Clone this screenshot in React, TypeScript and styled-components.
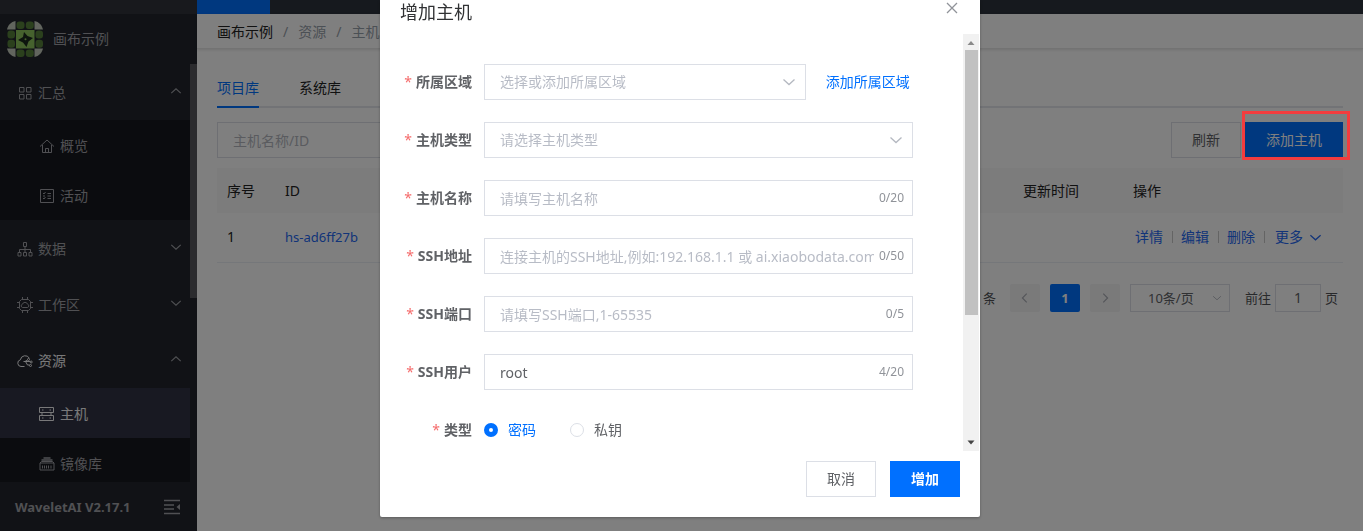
import React, { useState } from 'react';
import styled, { createGlobalStyle, css } from 'styled-components';

const Global = createGlobalStyle`
  *, *::before, *::after { box-sizing: border-box; }
  body {
    margin: 0;
    overflow: hidden;
    background: #fff;
    color: #303133;
    font: 14px/20px "Noto Sans", "Noto Sans CJK SC", sans-serif;
  }
  button, input, select { font: inherit; margin: 0; border-radius: 0; outline: none; }
  button { cursor: pointer; padding: 0; background: none; border: 0; color: inherit; }
  a { text-decoration: none; color: inherit; }
`;

const Svg = styled.svg<{ $size: number; $stroke?: number }>`
  width: ${p => p.$size}px;
  height: ${p => p.$size}px;
  flex: none;
  fill: none;
  stroke: currentColor;
  stroke-width: ${p => p.$stroke ?? 1};
`;

const Page = styled.div`
  display: flex;
  min-height: 100vh;
`;

/* ---------- sidebar ---------- */
const Sidebar = styled.aside`
  display: flex;
  flex-direction: column;
  flex: none;
  width: 197px;
  height: 100vh;
  background: #22252d;
  color: #a0a1a6;
`;
const SideStrip = styled.div`
  height: 14px;
  flex: none;
  background: #30323a;
`;
const Brand = styled.div`
  display: flex;
  align-items: center;
  gap: 10px;
  height: 50px;
  flex: none;
  padding-left: 7px;
`;
const MenuArea = styled.div`
  display: flex;
  flex: 1;
  min-height: 0;
  overflow: hidden;
`;
const Menu = styled.nav`
  flex: 1;
`;
const MenuThumb = styled.div`
  width: 7px;
  height: 234px;
  background: #56575c;
`;
const Group = styled.button<{ $active?: boolean }>`
  display: flex;
  align-items: center;
  gap: 4px;
  width: 100%;
  height: 56px;
  padding: 2px 8px 0 16px;
  text-align: left;
  color: ${p => (p.$active ? '#f2f2f4' : 'inherit')};
`;
const GroupName = styled.span`
  flex: 1;
`;
const Caret = styled.span`
  display: flex;
  padding-bottom: 4px;
  color: #a0a1a6;
`;
const SubItem = styled.a<{ $active?: boolean }>`
  display: flex;
  align-items: center;
  gap: 4px;
  height: 50px;
  padding: 2px 0 0 38px;
  background: ${p => (p.$active ? '#303244' : '#16181e')};
  color: ${p => (p.$active ? '#f2f2f4' : 'inherit')};
`;
const SideFoot = styled.footer`
  display: flex;
  align-items: center;
  justify-content: space-between;
  flex: none;
  height: 49px;
  padding: 0 16px 0 15px;
  font-size: 13px;
  font-weight: 700;
`;

/* ---------- main ---------- */
const Main = styled.main`
  flex: 1;
  min-width: 0;
`;
const TopBar = styled.div`
  height: 14px;
  background: #2c323c;
`;
const TopTab = styled.div`
  width: 73px;
  height: 100%;
  background: #0070ff;
`;
const Crumbs = styled.nav`
  display: flex;
  gap: 10px;
  height: 35px;
  padding: 8px 20px 0;
  border-bottom: 1px solid #e6e6e6;
  box-shadow: 0 1px 3px rgba(0, 0, 0, 0.12);
  color: #97a0aa;
  strong { font-weight: 400; color: #222; }
`;
const Content = styled.div`
  padding: 20px 20px 0;
`;
const Tabs = styled.div`
  display: flex;
  gap: 40px;
  border-bottom: 2px solid #e4e7ed;
`;
const Tab = styled.button<{ $active?: boolean }>`
  height: 39px;
  margin-bottom: -2px;
  border-bottom: 2px solid ${p => (p.$active ? '#0070ff' : 'transparent')};
  color: ${p => (p.$active ? '#0070ff' : '#222')};
`;
const Toolbar = styled.div`
  display: flex;
  gap: 4px;
  padding: 14px 0 10px;
`;
const Search = styled.input`
  width: 260px;
  height: 36px;
  margin-right: auto;
  padding: 0 15px;
  border: 1px solid #dcdfe6;
  &::placeholder { color: #b4b7be; opacity: 1; }
`;
const Button = styled.button<{ $primary?: boolean; $bold?: boolean }>`
  height: 36px;
  padding: 0 20px;
  border: 1px solid ${p => (p.$primary ? '#0070ff' : '#dcdfe6')};
  background: ${p => (p.$primary ? '#0070ff' : '#fff')};
  color: ${p => (p.$primary ? '#fff' : '#606266')};
  font-weight: ${p => (p.$bold ? 700 : 400)};
`;
const Highlight = styled.div`
  position: relative;
  &::after {
    content: '';
    position: absolute;
    z-index: 20;
    inset: -11px -7px -2px -3px;
    border: 3px solid #f23c3e;
    pointer-events: none;
  }
`;
const Table = styled.table`
  width: 100%;
  border-collapse: collapse;
  table-layout: fixed;
  color: #222;
  th, td { padding: 0 10px; text-align: left; font-weight: 400; }
  th { height: 45px; background: #f8f8f9; }
  td { height: 49px; border-bottom: 1px solid #ebeef5; }
`;
const Col = styled.col<{ $w?: number }>`
  ${p => p.$w && css`width: ${p.$w}px;`}
`;
const Link = styled.a`
  color: #2468f2;
`;
const HostId = styled(Link)`
  font-size: 13px;
`;
const Actions = styled.div`
  display: flex;
  align-items: center;
  padding-left: 2px;
  a + a { margin-left: 9px; padding-left: 9px; position: relative; }
  a + a::before { content: ''; position: absolute; left: 0; top: 4px; height: 12px; border-left: 1px solid #c8c8c8; }
  a:last-child { display: flex; align-items: center; gap: 6px; padding-left: 11px; }
`;
const Pager = styled.div`
  display: flex;
  align-items: center;
  justify-content: flex-end;
  gap: 10px;
  padding: 21px 5px 0 0;
  font-size: 13px;
  color: #505256;
`;
const PageButton = styled.button<{ $active?: boolean }>`
  display: flex;
  align-items: center;
  justify-content: center;
  width: 30px;
  height: 28px;
  border-radius: 2px;
  background: ${p => (p.$active ? '#0070ff' : '#f4f4f5')};
  color: ${p => (p.$active ? '#fff' : '#a8abb2')};
  font-weight: 700;
`;
const Total = styled.span`
  margin-right: 4px;
`;
const SelectBox = styled.div<{ $wide?: boolean }>`
  position: relative;
  display: flex;
  width: ${p => (p.$wide ? '100%' : '75%')};
  color: #b4b8c0;
  svg { position: absolute; right: 10px; top: 11px; pointer-events: none; }
`;
const FormSelect = styled.select`
  appearance: none;
  width: 100%;
  height: 36px;
  padding: 0 30px 0 15px;
  border: 1px solid #dcdfe6;
  background: #fff;
  color: #b8bcc6;
`;
const PageSizeBox = styled.div`
  position: relative;
  width: 100px;
  color: #b4b8c0;
  svg { position: absolute; right: 8px; top: 9px; pointer-events: none; }
`;
const PageSize = styled.select`
  appearance: none;
  display: block;
  width: 100%;
  height: 28px;
  padding: 0 0 0 17px;
  border: 1px solid #dcdfe6;
  background: #fff;
  color: #606266;
`;
const Jump = styled.label`
  display: flex;
  align-items: center;
  gap: 4px;
  margin-left: 5px;
  input {
    width: 46px;
    height: 28px;
    border: 1px solid #dcdfe6;
    padding: 0;
    text-align: center;
    font-size: 14px;
    color: #606266;
  }
`;

/* ---------- dialog ---------- */
const Overlay = styled.div`
  position: fixed;
  inset: 0;
  z-index: 10;
  display: flex;
  justify-content: center;
  align-items: flex-start;
  padding-right: 3px;
  background: rgba(0, 0, 0, 0.5);
`;
const Dialog = styled.section`
  width: 600px;
  background: #fff;
  border-radius: 0 0 2px 2px;
  box-shadow: 0 1px 3px rgba(0, 0, 0, 0.3);
`;
const DialogHead = styled.header`
  display: flex;
  justify-content: space-between;
  align-items: flex-start;
  height: 34px;
  padding: 0 20px;
  h2 { margin: 0; font-size: 18px; line-height: 24px; font-weight: 400; }
  button { display: flex; padding: 0; color: #909399; }
`;
const DialogBody = styled.div`
  display: flex;
  padding-right: 1px;
`;
const Form = styled.form`
  flex: 1;
  display: flex;
  flex-direction: column;
  gap: 22px;
  padding: 30px 50px 3px 20px;
`;
const Row = styled.div`
  display: flex;
  align-items: center;
  height: 36px;
`;
const Label = styled.label`
  flex: none;
  width: 84px;
  padding-right: 12px;
  text-align: right;
  font-weight: 700;
  color: #606266;
  white-space: nowrap;
  &::before { content: '*'; margin-right: 4px; color: #f56c6c; font-weight: 400; }
`;
const Field = styled.div`
  position: relative;
  display: flex;
  align-items: center;
  flex: 1;
  min-width: 0;
`;
const Text = styled.input`
  width: 100%;
  height: 36px;
  padding: 0 38px 0 15px;
  border: 1px solid #dcdfe6;
  color: #606266;
  &::placeholder { color: #b8bcc6; opacity: 1; }
`;
const Count = styled.span`
  position: absolute;
  right: 9px;
  font-size: 12px;
  color: #909399;
`;
const AddLink = styled.a`
  flex: none;
  margin-left: 20px;
  color: #0070ff;
`;
const Radio = styled.label<{ $on?: boolean }>`
  display: flex;
  align-items: center;
  gap: 10px;
  margin-right: 34px;
  color: ${p => (p.$on ? '#0070ff' : '#606266')};
  input {
    appearance: none;
    width: 14px;
    height: 14px;
    border: 1px solid #dcdfe6;
    border-radius: 50%;
    background: #fff;
  }
  input:checked { border: 5px solid #0070ff; }
`;
const ScrollTrack = styled.div`
  display: flex;
  flex-direction: column;
  align-items: center;
  width: 16px;
  background: #f1f1f1;
`;
const ScrollThumb = styled.div`
  width: 13px;
  height: 265px;
  margin-bottom: auto;
  background: #c1c1c1;
`;
const Arrow = styled.svg`
  width: 16px;
  height: 16px;
  flex: none;
`;
const DialogFoot = styled.footer`
  display: flex;
  justify-content: flex-end;
  gap: 14px;
  padding: 10px 20px 20px;
`;

/* ---------- icons ---------- */
const Chevron = ({ d, size = 14 }: { d: 'up' | 'down' | 'left' | 'right'; size?: number }) => {
  const paths = {
    up: 'M1.5 9.5 7 4.500l5.500 5',
    down: 'M1.5 4.500l5.500 5 5.500-5',
    left: 'M9 2 4 7l5 5',
    right: 'M5 2l5 5-5 5',
  };
  return <Svg $size={size} $stroke={1.3} viewBox="0 0 14 14"><path d={paths[d]} /></Svg>;
};

const Logo = () => (
  <Svg $size={36} viewBox="0 0 36 36">
    <g stroke="none">
      <path d="M8.500 0v8.500H0C1 4 4 1 8.500 0zM27.500 0v8.500H36C35 4 32 1 27.500 0zM8.500 36v-8.500H0c1 4.500 4 7.500 8.500 8.500zM27.500 36v-8.500H36c-1 4.500-4 7.500-8.500 8.500z" fill="#c4cbbc" />
      <rect x="9" y="9" width="18.500" height="18.500" fill="#8cc45c" />
      <g fill="#56803a">
        <rect x="9.500" y="0.500" width="8" height="7.500" rx="3" /><rect x="18.800" y="0.500" width="8" height="7.500" rx="3" />
        <rect x="9.500" y="28.500" width="8" height="7.500" rx="3" /><rect x="18.800" y="28.500" width="8" height="7.500" rx="3" />
        <rect x="0.500" y="9.500" width="7.500" height="8" rx="3" /><rect x="0.500" y="18.800" width="7.500" height="8" rx="3" />
        <rect x="28.500" y="9.500" width="7.500" height="8" rx="3" /><rect x="28.500" y="18.800" width="7.500" height="8" rx="3" />
      </g>
      <path d="M17 11l3.500 4 5.500 2-4.500 3.500-2 5.500-3.500-4.500-5-2.500 5-3z" fill="#1a2a1c" />
      <circle cx="18.500" cy="18.300" r="1" fill="#8cc45c" />
    </g>
  </Svg>
);

const icons = {
  grid: <path d="M3.500 3.500h4.500v4.500h-4.500zM10.500 3.500h4.500v4.500h-4.500zM3.500 10.500h4.500v4.500h-4.500zM10.500 10.500h4.500v4.500h-4.500z" />,
  home: <path d="M2 9.500l7-6.500 7 6.500M4.500 8v7.500h9V8M7.500 15.500v-4h3v4" />,
  list: <path d="M2.500 2.500h13v13h-13zM5 6l1 1 1.500-2M5 11l1 1 1.500-2M9.500 6.500H13M9.500 11.500H13M5 9h2M9.500 9H13" />,
  tree: <path d="M7.500 2.500h3v4h-3zM9 6.500V9M3.500 12.500V9.500h11v3M9 9v3.500M2 12.500h3v3.500H2zM7.500 12.500h3v3.500h-3zM13 12.500h3v3.500h-3z" />,
  chip: <><path d="M6.500 1v2.500M11.500 1v2.500M6.500 14.500v2.500M11.500 14.500v2.500M1 6.500h2.500M1 11.500h2.500M14.500 6.500h2.500M14.500 11.500h2.500M5.500 3.500h7l2 2v7l-2 2h-7l-2-2v-7z" /><path d="M6.500 11.500a1.700 1.700 0 0 1 0-3.300 2.600 2.600 0 0 1 5 0 1.700 1.700 0 0 1 0 3.300z" /></>,
  cloud: <><path d="M8.500 14.500H5a3.400 3.400 0 0 1-.600-6.700 4.800 4.800 0 0 1 9-1.500" /><path d="M7.500 9.500H14M9 9.500l2.500-1.500M9.500 9.500l2 3.500h2" /><circle cx="12.500" cy="7.500" r="1" /><circle cx="15.200" cy="10" r="1" /><circle cx="14.500" cy="13.500" r="1" /></>,
  server: <path d="M1.500 2.500h14v5h-14zM1.500 10.500h14v5h-14zM4 7.500v3M13 7.500v3M4 5h1.500M11.500 5h1.500M4 13h1.500M11.500 13h1.500" />,
  image: <><path d="M5.500 3h7M3.500 5h11" strokeWidth="1.500" /><path d="M2 8l1.500-1.500h11L16 8M2 8h14v7H2zM4.500 10.500v3M6.500 10.500v3M8.500 10.500v3M10.500 10.500v3M13 10.500v3" /></>,
};
const Icon = ({ name }: { name: keyof typeof icons }) => (
  <Svg $size={18} viewBox="0 0 18 18">{icons[name]}</Svg>
);

const MenuGroup = ({ icon, text, open, active }: { icon: keyof typeof icons; text: string; open?: boolean; active?: boolean }) => (
  <Group type="button" $active={active} aria-expanded={!!open}>
    <Icon name={icon} />
    <GroupName>{text}</GroupName>
    <Caret><Chevron d={open ? 'up' : 'down'} size={12} /></Caret>
  </Group>
);

const CountedField = ({ id, label, placeholder, max, initial = '' }: { id: string; label: string; placeholder?: string; max: number; initial?: string }) => {
  const [value, setValue] = useState(initial);
  return (
    <Row>
      <Label htmlFor={id}>{label}</Label>
      <Field>
        <Text id={id} placeholder={placeholder} value={value} onChange={e => setValue(e.target.value)} />
        <Count>{value.length}/{max}</Count>
      </Field>
    </Row>
  );
};

export default function App() {
  const [auth, setAuth] = useState('password');
  return (
    <>
      <Global />
      <Page>
        <Sidebar>
          <SideStrip />
          <Brand><Logo />画布示例</Brand>
          <MenuArea>
            <Menu>
              <MenuGroup icon="grid" text="汇总" open />
              <SubItem href="#"><Icon name="home" />概览</SubItem>
              <SubItem href="#"><Icon name="list" />活动</SubItem>
              <MenuGroup icon="tree" text="数据" />
              <MenuGroup icon="chip" text="工作区" />
              <MenuGroup icon="cloud" text="资源" open active />
              <SubItem href="#" $active><Icon name="server" />主机</SubItem>
              <SubItem href="#"><Icon name="image" />镜像库</SubItem>
            </Menu>
            <MenuThumb />
          </MenuArea>
          <SideFoot>
            WaveletAI V2.17.1
            <Svg $size={18} $stroke={1.5} viewBox="0 0 18 18"><path d="M1 2.500h16M1 7h10M1 11h10M1 15.500h16" /><path d="M17 6v6l-3.500-3z" fill="currentColor" stroke="none" /></Svg>
          </SideFoot>
        </Sidebar>

        <Main>
          <TopBar><TopTab /></TopBar>
          <Crumbs>
            <strong>画布示例</strong><span>/</span><a href="#">资源</a><span>/</span><span>主机</span>
          </Crumbs>
          <Content>
            <Tabs>
              <Tab type="button" $active>项目库</Tab>
              <Tab type="button">系统库</Tab>
            </Tabs>
            <Toolbar>
              <Search aria-label="主机名称/ID" placeholder="主机名称/ID" />
              <Button type="button">刷新</Button>
              <Highlight><Button type="button" $primary>添加主机</Button></Highlight>
            </Toolbar>
            <Table>
              <colgroup><Col $w={58} /><Col /><Col $w={110} /><Col $w={220} /></colgroup>
              <thead>
                <tr><th>序号</th><th>ID</th><th>更新时间</th><th>操作</th></tr>
              </thead>
              <tbody>
                <tr>
                  <td>1</td>
                  <td><HostId href="#">hs-ad6ff27b</HostId></td>
                  <td />
                  <td>
                    <Actions>
                      <Link href="#">详情</Link><Link href="#">编辑</Link><Link href="#">删除</Link>
                      <Link href="#">更多<Chevron d="down" size={13} /></Link>
                    </Actions>
                  </td>
                </tr>
              </tbody>
            </Table>
            <Pager>
              <Total>共 1 条</Total>
              <PageButton type="button" aria-label="上一页"><Chevron d="left" size={12} /></PageButton>
              <PageButton type="button" $active>1</PageButton>
              <PageButton type="button" aria-label="下一页"><Chevron d="right" size={12} /></PageButton>
              <PageSizeBox>
                <PageSize aria-label="每页条数"><option>10条/页</option></PageSize>
                <Chevron d="down" size={10} />
              </PageSizeBox>
              <Jump>前往<input defaultValue="1" />页</Jump>
            </Pager>
          </Content>
        </Main>
      </Page>

      <Overlay>
        <Dialog role="dialog" aria-labelledby="dialog-title">
          <DialogHead>
            <h2 id="dialog-title">增加主机</h2>
            <button type="button" aria-label="关闭">
              <Svg $size={16} $stroke={1.3} viewBox="0 0 16 16"><path d="M3 3l10 10M13 3L3 13" /></Svg>
            </button>
          </DialogHead>
          <DialogBody>
            <Form>
              <Row>
                <Label htmlFor="region">所属区域</Label>
                <Field>
                  <SelectBox>
                    <FormSelect id="region"><option>选择或添加所属区域</option></FormSelect>
                    <Chevron d="down" />
                  </SelectBox>
                  <AddLink href="#">添加所属区域</AddLink>
                </Field>
              </Row>
              <Row>
                <Label htmlFor="kind">主机类型</Label>
                <Field>
                  <SelectBox $wide>
                    <FormSelect id="kind"><option>请选择主机类型</option></FormSelect>
                    <Chevron d="down" />
                  </SelectBox>
                </Field>
              </Row>
              <CountedField id="name" label="主机名称" placeholder="请填写主机名称" max={20} />
              <CountedField id="host" label="SSH地址" placeholder="连接主机的SSH地址,例如:192.168.1.1 或 ai.xiaobodata.com" max={50} />
              <CountedField id="port" label="SSH端口" placeholder="请填写SSH端口,1-65535" max={5} />
              <CountedField id="user" label="SSH用户" initial="root" max={20} />
              <Row>
                <Label as="span">类型</Label>
                <Field role="radiogroup" aria-label="类型">
                  <Radio $on={auth === 'password'}>
                    <input type="radio" name="auth" checked={auth === 'password'} onChange={() => setAuth('password')} />密码
                  </Radio>
                  <Radio $on={auth === 'key'}>
                    <input type="radio" name="auth" checked={auth === 'key'} onChange={() => setAuth('key')} />私钥
                  </Radio>
                </Field>
              </Row>
            </Form>
            <ScrollTrack>
              <Arrow viewBox="0 0 16 16"><path d="M4.500 11 8 7l3.500 4z" fill="#8a8a8a" /></Arrow>
              <ScrollThumb />
              <Arrow viewBox="0 0 16 16"><path d="M4.500 5.500 8 9.500l3.500-4z" fill="#444" /></Arrow>
            </ScrollTrack>
          </DialogBody>
          <DialogFoot>
            <Button type="button">取消</Button>
            <Button type="button" $primary $bold>增加</Button>
          </DialogFoot>
        </Dialog>
      </Overlay>
    </>
  );
}
